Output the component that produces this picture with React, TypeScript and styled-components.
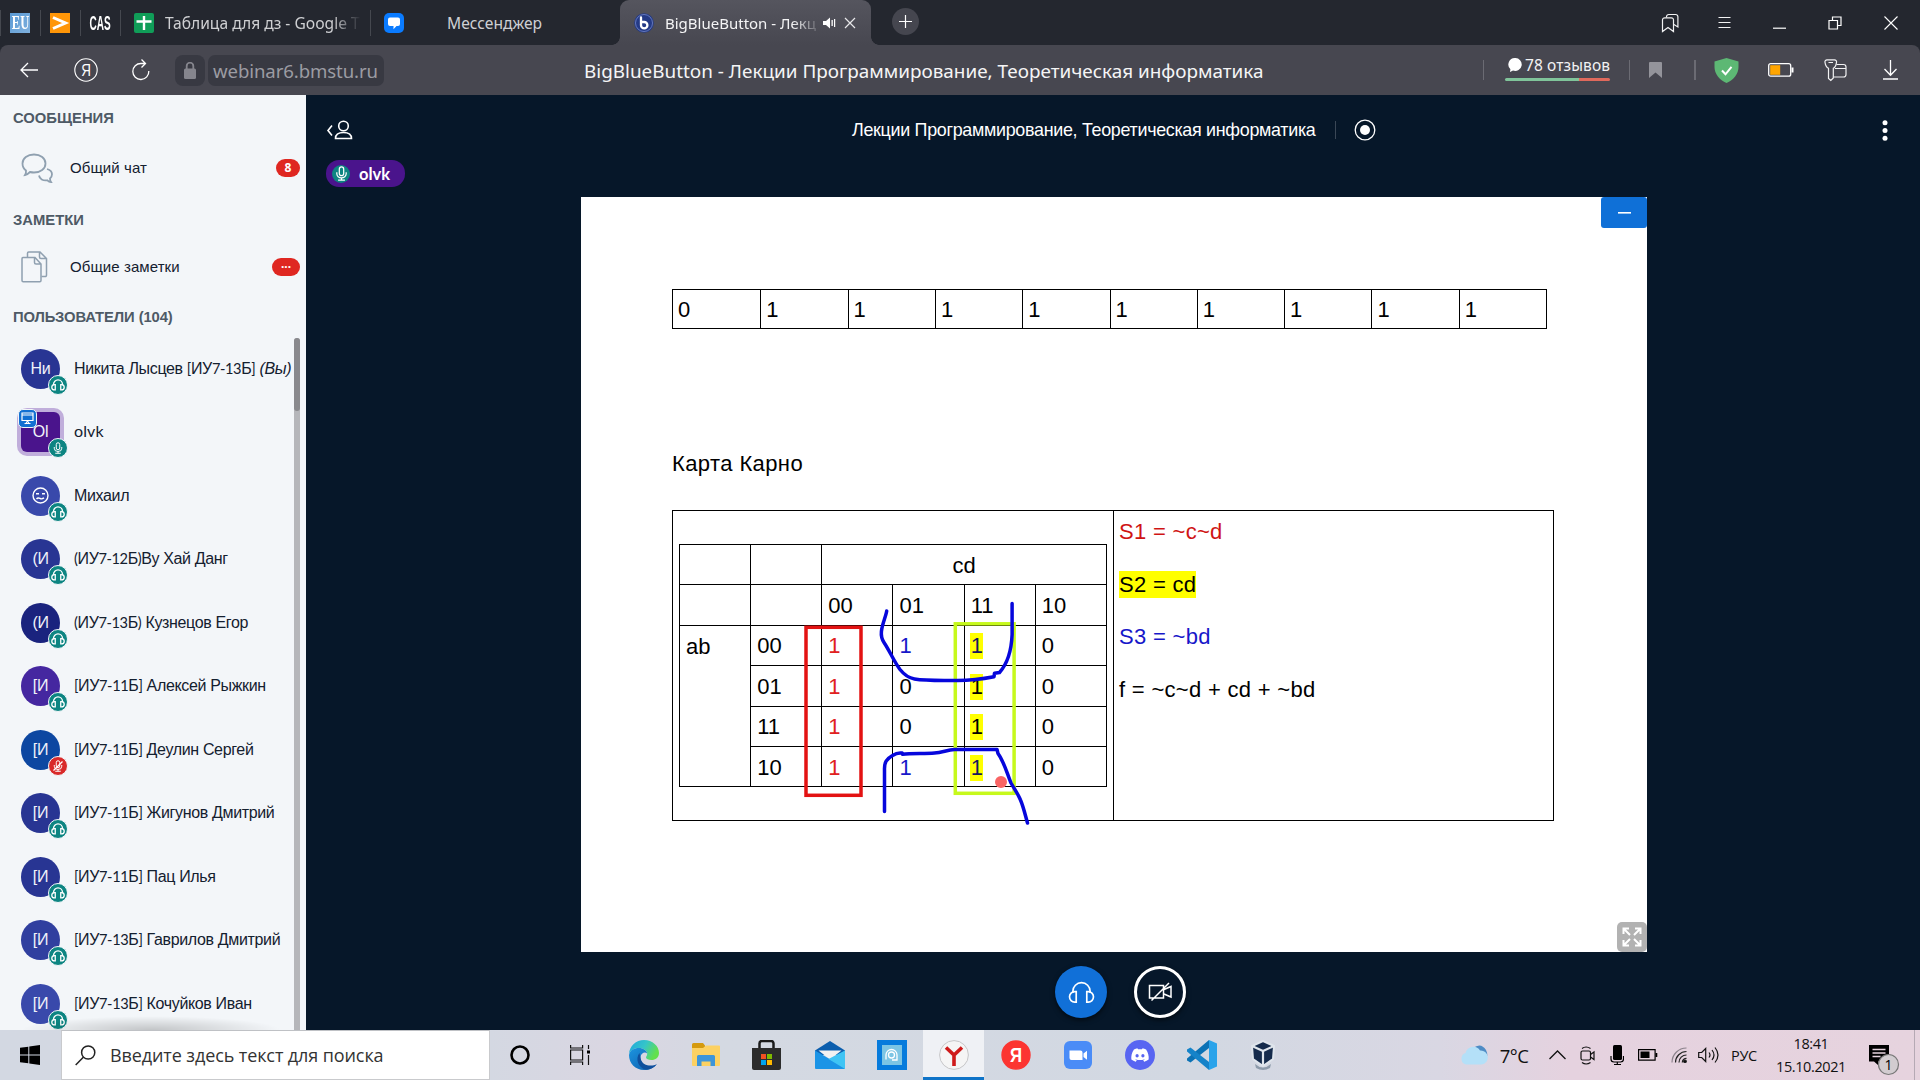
import React from "react";
import styled, { createGlobalStyle } from "styled-components";
import { FaDiscord } from "react-icons/fa";

const UI = '"Noto Sans", "Open Sans", sans-serif';
const ARIAL = '"Liberation Sans", Arial, sans-serif';
const TASK = '"Open Sans", "Noto Sans", sans-serif';

const Global = createGlobalStyle`
  * { box-sizing: border-box; }
  html, body { margin: 0; padding: 0; overflow: hidden; background: #06172a; }
  svg { display: block; flex: none; }
`;

const Screen = styled.div`
  width: 1920px;
  height: 1080px;
  display: flex;
  flex-direction: column;
  overflow: hidden;
  background: #061729;
  font-family: ${ARIAL};
`;

/* ---------- browser tabs ---------- */
const TabBar = styled.div`
  height: 45px;
  flex: none;
  display: flex;
  background: #24272f;
  font-family: ${UI};
  color: #d0d1d4;
`;
const PinnedTab = styled.div`
  width: 40px;
  height: 26px;
  margin-top: 10px;
  border-left: 1px solid #45484f;
  display: flex;
  align-items: center;
  padding-left: 9px;
`;
const Tab = styled.div<{ $w: number; $pad: number }>`
  width: ${(p) => p.$w}px;
  height: 26px;
  margin-top: 10px;
  border-left: 1px solid #45484f;
  display: flex;
  align-items: center;
  padding-left: ${(p) => p.$pad}px;
`;
const TabText = styled.div<{ $w: number; $ml: number; $size?: number; $light?: boolean; $fade?: boolean }>`
  width: ${(p) => p.$w}px;
  margin-left: ${(p) => p.$ml}px;
  white-space: nowrap;
  font-size: ${(p) => p.$size ?? 15.6}px;
  line-height: 24px;
  color: ${(p) => (p.$light ? "#f4f4f5" : "#cfd0d3")};
  mask-image: ${(p) => (p.$fade ? "linear-gradient(90deg, #000 calc(100% - 30px), transparent)" : "none")};
`;
const Favicon = styled.div<{ $bg: string; $r?: number }>`
  width: 20px;
  height: 20px;
  flex: none;
  border-radius: ${(p) => p.$r ?? 0}px;
  background: ${(p) => p.$bg};
  display: flex;
  align-items: center;
  justify-content: center;
`;
const FavText = styled.span<{ $size: number; $squeeze: number }>`
  font: 700 ${(p) => p.$size}px/20px "Liberation Serif", serif;
  color: #fff;
  transform: scaleX(${(p) => p.$squeeze});
`;
const CasText = styled(FavText)`
  font-family: "Liberation Sans", sans-serif;
`;
const ActiveTab = styled.div`
  width: 251px;
  height: 45px;
  border-radius: 9px 9px 0 0;
  background: linear-gradient(#55555e, #474750);
  display: flex;
  align-items: center;
  padding: 1px 0 0 14px;
  position: relative;
  &::before,
  &::after {
    content: "";
    position: absolute;
    bottom: 0;
    width: 8px;
    height: 8px;
  }
  &::before {
    left: -8px;
    background: radial-gradient(circle at 0 0, transparent 7.5px, #474750 8px);
  }
  &::after {
    right: -8px;
    background: radial-gradient(circle at 100% 0, transparent 7.5px, #474750 8px);
  }
`;
const TabTools = styled.div`
  display: flex;
  align-items: center;
  gap: 8px;
`;
const NewTab = styled.div`
  width: 27px;
  height: 27px;
  margin: 8px 0 0 21px;
  border-radius: 50%;
  background: #45464f;
`;
const WindowIcons = styled.div`
  margin-left: auto;
  display: flex;
  align-items: center;
`;
const Slot = styled.div<{ $w: number }>`
  width: ${(p) => p.$w}px;
  flex: none;
  display: flex;
  align-items: center;
  justify-content: center;
`;

/* ---------- toolbar ---------- */
const ToolBarBack = styled.div`
  height: 50px;
  flex: none;
  background: #24272f;
`;
const ToolBar = styled.div`
  height: 50px;
  display: flex;
  align-items: center;
  background: #474750;
  border-radius: 8px 8px 0 0;
  font-family: ${UI};
`;
const NavButtons = styled.div`
  width: 175px;
  display: flex;
  align-items: center;
`;
const LockBox = styled.div`
  width: 30px;
  height: 31px;
  border-radius: 8px;
  background: #383942;
  display: flex;
  align-items: center;
  justify-content: center;
`;
const UrlBox = styled.div`
  width: 176px;
  height: 31px;
  margin-left: 3px;
  border-radius: 7px;
  background: #383942;
  color: #9c9ca3;
  font-size: 18.6px;
  line-height: 31px;
  padding-left: 5px;
  white-space: nowrap;
  letter-spacing: -0.1px;
`;
const PageTitle = styled.div`
  width: 699px;
  margin-left: 200px;
  padding-top: 2px;
  color: #f5f5f6;
  font-size: 18.9px;
  line-height: 30px;
  white-space: nowrap;
`;
const VLine = styled.div<{ $h: number; $w?: number; $c?: string }>`
  width: ${(p) => p.$w ?? 1}px;
  height: ${(p) => p.$h}px;
  background: ${(p) => p.$c ?? "#6b6b73"};
`;
const Reviews = styled.div`
  width: 105px;
  margin: 0 19px 5px 21px;
`;
const ReviewText = styled.div`
  display: flex;
  align-items: center;
  gap: 3px;
  padding-left: 3px;
  height: 22px;
  color: #f2f2f3;
  font-size: 15.5px;
  line-height: 20px;
  white-space: nowrap;
  letter-spacing: 0.1px;
`;
const ReviewBar = styled.div`
  height: 3px;
  border-radius: 2px;
  margin-top: 2px;
  background: linear-gradient(90deg, #80c49a 0 74px, #e0695c 74px);
`;
const ToolIcons = styled.div`
  display: flex;
  align-items: center;
  margin-left: auto;
`;

/* ---------- conference ---------- */
const Body = styled.div`
  height: 935px;
  flex: none;
  display: flex;
`;
const Sidebar = styled.aside`
  width: 306px;
  height: 935px;
  flex: none;
  background: #f3f6f9;
  color: #14202f;
  overflow: hidden;
`;
const SideHeader = styled.div<{ $h: number; $pt?: number; $ls?: number }>`
  height: ${(p) => p.$h}px;
  padding: ${(p) => p.$pt ?? 0}px 0 0 13px;
  display: flex;
  align-items: center;
  color: #4e5a66;
  font-size: 14.8px;
  font-weight: 700;
  white-space: pre;
  letter-spacing: ${(p) => p.$ls ?? 0}px;
`;
const SideRow = styled.div<{ $h: number }>`
  height: ${(p) => p.$h}px;
  display: flex;
  align-items: center;
  padding: 0 6px 0 21px;
`;
const SideLabel = styled.div`
  margin-left: 16px;
  font-size: 15px;
  line-height: 20px;
  letter-spacing: 0.08px;
  flex: 1;
`;
const Count = styled.div<{ $w: number }>`
  width: ${(p) => p.$w}px;
  height: 18px;
  border-radius: 9px;
  background: #df2721;
  color: #fff;
  font: 700 12px/18px "Noto Sans", sans-serif;
  text-align: center;
`;
const UserList = styled.div`
  height: 693px;
  display: flex;
  overflow: hidden;
  position: relative;
`;
const Users = styled.div`
  width: 294px;
  overflow: hidden;
`;
const Track = styled.div`
  width: 6px;
  margin-top: 1px;
  background: #b5b6ba;
  border-radius: 3px 3px 0 0;
`;
const Thumb = styled.div`
  height: 73px;
  border-radius: 3px;
  background: #89898d;
`;
const ListShade = styled.div`
  position: absolute;
  left: 20px;
  bottom: 0;
  width: 262px;
  height: 14px;
  background: radial-gradient(ellipse at 50% 100%, rgba(0, 0, 0, 0.2), transparent 70%);
`;
const UserRow = styled.div`
  height: 63.5px;
  display: flex;
  align-items: center;
  padding-left: 21px;
`;
const Avatar = styled.div<{ $c: string; $square?: boolean }>`
  width: 39px;
  height: 40px;
  flex: none;
  border-radius: ${(p) => (p.$square ? "6px" : "50%")};
  box-shadow: ${(p) => (p.$square ? "0 0 0 4px #c0aedb" : "none")};
  background: ${(p) => p.$c};
  color: #f1f2fa;
  font-size: 16px;
  display: flex;
  align-items: center;
  justify-content: center;
  position: relative;
  letter-spacing: -0.3px;
`;
const Status = styled.div<{ $c: string }>`
  position: absolute;
  left: 27px;
  top: 26px;
  width: 20px;
  height: 20px;
  border-radius: 50%;
  border: 1px solid #f3f6f9;
  background: ${(p) => p.$c};
  display: flex;
  align-items: center;
  justify-content: center;
`;
const Presenter = styled.div`
  position: absolute;
  left: -3px;
  top: -3px;
  width: 19px;
  height: 19px;
  border-radius: 5px;
  border: 1px solid #f3f6f9;
  background: #1270d2;
  display: flex;
  align-items: center;
  justify-content: center;
`;
const UserName = styled.div`
  margin-left: 14px;
  font-size: 16px;
  line-height: 22px;
  letter-spacing: -0.35px;
  white-space: pre;
`;
const Latin = styled.span<{ $small: boolean }>`
  font-family: Lato, sans-serif;
  font-size: ${(p) => (p.$small ? 14.6 : 16)}px;
  letter-spacing: ${(p) => (p.$small ? -0.4 : 0.1)}px;
  line-height: 20px;
`;
const Stage = styled.main`
  flex: 1;
  min-width: 0;
  display: flex;
  flex-direction: column;
`;
const StageHeader = styled.div`
  height: 65px;
  display: flex;
  align-items: center;
  padding: 5px 0 0 20px;
`;
const MeetingTitle = styled.div`
  width: 483px;
  margin-left: 499px;
  color: #fff;
  font-size: 17.9px;
  line-height: 24px;
  white-space: nowrap;
  letter-spacing: -0.3px;
`;
const MenuSlot = styled(Slot)`
  margin-left: auto;
`;
const Talking = styled.div`
  width: 79px;
  height: 27px;
  margin-left: 20px;
  border-radius: 13px;
  background: #4a148c;
  display: flex;
  align-items: center;
  padding-left: 6px;
  color: #fff;
  font: 700 16.5px/24px Lato, sans-serif;
`;
const TalkIcon = styled.div`
  width: 18px;
  height: 18px;
  margin-right: 9px;
  border-radius: 50%;
  background: #0d8582;
  display: flex;
  align-items: center;
  justify-content: center;
`;
const Slide = styled.section`
  width: 1066px;
  height: 755px;
  margin: 10px 0 0 275px;
  background: #fff;
  position: relative;
  padding: 92px 0 0 91px;
  color: #000;
  font-size: 22px;
  line-height: 26px;
`;
const Minimize = styled.div`
  position: absolute;
  right: 0;
  top: 0;
  width: 46px;
  height: 31px;
  border-radius: 3px;
  background: #0f70d7;
  display: flex;
  align-items: center;
  justify-content: center;
`;
const Fullscreen = styled.div`
  position: absolute;
  right: 0;
  bottom: 0;
  width: 30px;
  height: 30px;
  border-radius: 5px;
  background: #b2b2b2;
  display: flex;
  align-items: center;
  justify-content: center;
`;
const BitRow = styled.div`
  width: 875px;
  height: 40px;
  display: grid;
  grid-template-columns: repeat(10, 1fr);
  border: 1px solid #000;
`;
const BitCell = styled.div`
  padding: 7px 0 0 5px;
  & + & {
    border-left: 1px solid #000;
  }
`;
const Caption = styled.div`
  margin-top: 122px;
  height: 27px;
  letter-spacing: 0.4px;
`;
const Outer = styled.div`
  width: 882px;
  height: 311px;
  margin-top: 32px;
  border: 1px solid #000;
  display: grid;
  grid-template-columns: 440px 1fr;
`;
const OuterLeft = styled.div`
  padding: 33px 0 0 6px;
`;
const OuterRight = styled.div`
  border-left: 1px solid #000;
  padding: 7px 0 0 5px;
`;
const Formula = styled.div<{ $c: string; $bg?: string }>`
  height: 52.5px;
  color: ${(p) => p.$c};
  span {
    background: ${(p) => p.$bg ?? "none"};
    display: inline-block;
    height: 27px;
    line-height: 27px;
    white-space: pre;
    letter-spacing: 0.3px;
  }
`;
const KTable = styled.table`
  width: 428px;
  border-collapse: collapse;
  table-layout: fixed;
  td {
    border: 1px solid #000;
    height: 40.4px;
    padding: 2px 0 0 6px;
    vertical-align: middle;
    line-height: 26px;
  }
`;
const CdCell = styled.td`
  && {
    text-align: center;
    padding: 3px 0 0 0;
  }
`;
const AbCell = styled.td`
  && {
    vertical-align: top;
    padding-top: 8px;
  }
`;
const Bit = styled.span<{ $c: string; $mark?: boolean }>`
  display: inline-block;
  height: 26px;
  padding: 0 0.5px;
  margin-left: -0.5px;
  color: ${(p) => p.$c};
  background: ${(p) => (p.$mark ? "#ffff00" : "none")};
`;
const Ink = styled.svg`
  position: absolute;
  left: 0;
  top: 0;
`;
const Actions = styled.div`
  display: flex;
  gap: 27px;
  margin: 14px 0 0 749px;
`;
const RoundButton = styled.div<{ $bg: string; $ring?: boolean }>`
  width: 52px;
  height: 52px;
  border-radius: 50%;
  background: ${(p) => p.$bg};
  border: ${(p) => (p.$ring ? "3px solid #fff" : "none")};
  box-shadow: 0 2px 5px rgba(0, 0, 0, 0.6);
  display: flex;
  align-items: center;
  justify-content: center;
`;

/* ---------- taskbar ---------- */
const TaskBar = styled.footer`
  height: 50px;
  flex: none;
  display: flex;
  background: linear-gradient(90deg, #d3d8e2 0, #d4d8e2 490px, #dad6e2 620px, #d4d9e2 720px, #d2d8e2 1200px, #d9d7e3 1440px, #e5d2df 1570px, #e6d3de 1920px);
  color: #111;
  font-family: ${TASK};
`;
const Search = styled.div`
  width: 429px;
  height: 50px;
  margin-left: 1px;
  background: #fff;
  border: 1px solid #c9cacd;
  border-top: 1px solid #bfc1c5;
  display: flex;
  align-items: center;
  padding-left: 13px;
  color: #333;
  font-size: 18px;
  letter-spacing: -0.1px;
  white-space: nowrap;
`;
const SearchText = styled.span`
  margin-left: 14px;
`;
const TaskSlot = styled.div<{ $w: number; $active?: boolean }>`
  width: ${(p) => p.$w}px;
  height: 50px;
  flex: none;
  display: flex;
  align-items: center;
  justify-content: center;
  background: ${(p) => (p.$active ? "#eff1f5" : "none")};
  border-bottom: ${(p) => (p.$active ? "3px solid #0f74c8" : "none")};
  padding-top: ${(p) => (p.$active ? "3px" : "0")};
`;
const Tray = styled.div`
  margin-left: auto;
  display: flex;
  align-items: center;
`;
const TrayText = styled.div<{ $w: number; $size: number; $ls?: number }>`
  width: ${(p) => p.$w}px;
  font-size: ${(p) => p.$size}px;
  letter-spacing: ${(p) => p.$ls ?? 0}px;
  text-align: center;
  white-space: nowrap;
`;
const Clock = styled.div`
  width: 90px;
  text-align: center;
  font-size: 14.5px;
  line-height: 23px;
  letter-spacing: -0.4px;
`;
const Note = styled.div`
  width: 48px;
  height: 50px;
  margin-left: 11px;
  border-right: 1px solid #b5a9b4;
`;

/* ---------- icons ---------- */
const Headset = ({ size, sw = 1.6 }: { size: number; sw?: number }) => (
  <svg width={size} height={size} viewBox="0 0 24 24" fill="none" stroke="#fff" strokeWidth={sw}>
    <path d="M4.3 12.5V11a7.7 7.7 0 0 1 15.4 0v1.5" />
    <path d="M7.3 11.2v9.3H6a4.6 4.6 0 0 1 0-9.3zM16.7 11.2v9.3H18a4.6 4.6 0 0 0 0-9.3z" />
  </svg>
);
const Mic = ({ size, off }: { size: number; off?: boolean }) => (
  <svg width={size} height={size} viewBox="0 0 24 24" fill="none" stroke="#fff" strokeWidth="2">
    <rect x="8.5" y="1.5" width="7" height="14" rx="3.5" />
    <path d="M4.5 10v2.5a7.5 6.5 0 0 0 15 0V10M12 19v3.5M6.5 22.5h11" />
    {off && <path d="M3 21 21 3" strokeWidth="2.6" />}
  </svg>
);
const ChatIcon = () => (
  <svg width="33" height="31" viewBox="0 0 33 31" fill="none" stroke="#8fa0b0" strokeWidth="1.8">
    <path d="M13 1.5c6.5 0 11.5 3.8 11.5 9s-5 9-11.5 9c-1.400 0-2.700-.2-4-.5C7.500 20.500 6 21.700 4 22c.8-1.300 1.200-2.800 1-4.500-2.300-1.700-3.500-4.200-3.500-7 0-5.200 5-9 11.500-9z" />
    <path d="M26 16c3 .8 5 2.800 5 5.300 0 1.700-.8 3.200-2 4.200 0 1.300.3 2.500 1 3.500-1.500 0-2.800-.8-3.700-1.700-4.300.7-7.800-1.500-8.300-4.800" />
  </svg>
);
const NotesIcon = () => (
  <svg width="33" height="32" viewBox="0 0 33 32" fill="none" stroke="#8fa0b0" strokeWidth="1.5">
    <path d="M2 6.500h12l6 6.500v16.500a1.200 1.200 0 0 1-1.200 1.200H2.200A1.200 1.200 0 0 1 1 29.500V7.700a1.200 1.200 0 0 1 1-1.200zM13.500 7v4.500a1.500 1.500 0 0 0 1.500 1.500h5" />
    <path d="M6.500 6V2.200A1.200 1.200 0 0 1 7.700 1H19l6.500 6.500v16.800a1.200 1.200 0 0 1-1.200 1.200H20.500M18.500 1.500V6A1.500 1.500 0 0 0 20 7.500h5" />
  </svg>
);
const Yandex = ({ fill, stroke, size }: { fill: string; stroke: string; size: number }) => (
  <svg width={size} height={size} viewBox="0 0 30 30">
    <circle cx="15" cy="15" r="14" fill={fill} stroke={stroke} strokeWidth="1.400" />
    <text x="15" y="22.500" textAnchor="middle" fontSize="21" fontWeight={fill === "none" ? 400 : 700} fontFamily="Liberation Sans, sans-serif" fill="#fff" transform="translate(3 0) scale(.8 1)">
      Я
    </text>
  </svg>
);

const users: { ini: string; name: string; c: string; kind?: "mic" | "off"; face?: boolean; you?: boolean }[] = [
  { ini: "Ни", name: "Никита Лысцев [ИУ7-13Б] ", c: "#283593", you: true },
  { ini: "Ol", name: "olvk", c: "#4a148c", kind: "mic" },
  { ini: "", name: "Михаил", c: "#3949ab", face: true },
  { ini: "(И", name: "(ИУ7-12Б)Ву Хай Данг", c: "#283593" },
  { ini: "(И", name: "(ИУ7-13Б) Кузнецов Егор", c: "#1a237e" },
  { ini: "[И", name: "[ИУ7-11Б] Алексей Рыжкин", c: "#4527a0" },
  { ini: "[И", name: "[ИУ7-11Б] Деулин Сергей", c: "#0d47a1", kind: "off" },
  { ini: "[И", name: "[ИУ7-11Б] Жигунов Дмитрий", c: "#283593" },
  { ini: "[И", name: "[ИУ7-11Б] Пац Илья", c: "#283593" },
  { ini: "[И", name: "[ИУ7-13Б] Гаврилов Дмитрий", c: "#303f9f" },
  { ini: "[И", name: "[ИУ7-13Б] Кочуйков Иван", c: "#3949ab" },
];

const Mixed = ({ text }: { text: string }) => (
  <>
    {text.split(/([0-9\-[\]()a-z]+)/).map((s, i) =>
      i % 2 ? (
        <Latin key={i} $small={!/[a-z]/.test(s)}>
          {s}
        </Latin>
      ) : (
        s
      )
    )}
  </>
);

const bits = ["0", "1", "1", "1", "1", "1", "1", "1", "1", "1"];
const karno = [
  { ab: "00", mid: "1" },
  { ab: "01", mid: "0" },
  { ab: "11", mid: "0" },
  { ab: "10", mid: "1" },
];
const BLUE = "#1717c9";

export default function App() {
  return (
    <Screen>
      <Global />
      <TabBar>
        <PinnedTab>
          <Favicon $bg="linear-gradient(135deg,#5b9ad5,#7fb0dd)">
            <FavText $size={18} $squeeze={0.7}>EU</FavText>
          </Favicon>
        </PinnedTab>
        <PinnedTab>
          <Favicon $bg="#ff9608">
            <svg width="20" height="20" viewBox="0 0 20 20" fill="none" stroke="#fff" strokeWidth="3">
              <path d="M3 4.500 15.500 10 3 15.500" />
            </svg>
          </Favicon>
        </PinnedTab>
        <PinnedTab>
          <Favicon $bg="none">
            <CasText $size={20} $squeeze={0.5}>CAS</CasText>
          </Favicon>
        </PinnedTab>
        <Tab $w={250} $pad={13}>
          <Favicon $bg="#109d58" $r={2}>
            <svg width="20" height="20" viewBox="0 0 20 20" fill="none" stroke="#fff" strokeWidth="2.400">
              <path d="M10 3v14M2.500 8.500h15" />
            </svg>
          </Favicon>
          <TabText $w={196} $ml={11} $fade>Таблица для дз - Google Т</TabText>
        </Tab>
        <Tab $w={250} $pad={13}>
          <Favicon $bg="#0a7bff" $r={5}>
            <svg width="20" height="20" viewBox="0 0 20 20">
              <path d="M6 4.500h8a2 2 0 0 1 2 2V11a2 2 0 0 1-2 2h-1.500l-3 3.200V13H6a2 2 0 0 1-2-2V6.500a2 2 0 0 1 2-2z" fill="#fff" />
            </svg>
          </Favicon>
          <TabText $w={135} $ml={43}>Мессенджер</TabText>
        </Tab>
        <ActiveTab>
          <svg width="20" height="20" viewBox="0 0 20 20">
            <circle cx="10" cy="10" r="9.800" fill="#243a86" />
            <circle cx="10" cy="10" r="8.500" fill="none" stroke="#6478bb" />
            <path d="M7 4.500v7.700a3.200 3.200 0 1 0 3.200-3.200H8.500" fill="none" stroke="#fff" strokeWidth="2.300" strokeLinecap="round" />
          </svg>
          <TabText $w={157} $ml={11} $size={15} $light $fade>BigBlueButton - Лекц</TabText>
          <TabTools>
            <svg width="14" height="14" viewBox="0 0 14 14" fill="#fff">
              <path d="M1 5h3l4-3.500v11L4 9H1zM9.500 4h1.300v6H9.500zM12 3h1.200v8H12z" />
            </svg>
            <svg width="12" height="12" viewBox="0 0 12 12" stroke="#e8e8ea" strokeWidth="1.200">
              <path d="M1 1l10 10M11 1 1 11" />
            </svg>
          </TabTools>
        </ActiveTab>
        <NewTab>
          <svg width="27" height="27" viewBox="0 0 27 27" stroke="#fff" strokeWidth="1.200">
            <path d="M13.500 7v13M7 13.500h13" />
          </svg>
        </NewTab>
        <WindowIcons>
          <Slot $w={55}>
            <svg width="18" height="20" viewBox="0 0 18 20" fill="none" stroke="#f2f2f3" strokeWidth="1.200">
              <path d="M1.500 18.500V7a2.200 2.200 0 0 1 2.200-2.200h6.600A2.200 2.200 0 0 1 12.500 7v11.500L7 14.500z" />
              <path d="M5.500 4.500V3.700a2.200 2.200 0 0 1 2.200-2.200h7a2.200 2.200 0 0 1 2.200 2.200V14l-4-2.500" />
            </svg>
          </Slot>
          <Slot $w={55}>
            <svg width="13" height="13" viewBox="0 0 13 13" stroke="#f2f2f3" strokeWidth="1.200">
              <path d="M.500 1.500h12M.500 6.500h12M.500 11.500h12" />
            </svg>
          </Slot>
          <Slot $w={55}>
            <svg width="13" height="13" viewBox="0 0 13 13" stroke="#fff" strokeWidth="1.200">
              <path d="M0 12.200h13" />
            </svg>
          </Slot>
          <Slot $w={55}>
            <svg width="14" height="14" viewBox="0 0 14 14" fill="none" stroke="#fff" strokeWidth="1.200">
              <path d="M1 4.500h8.500V13H1zM4.500 4V1H13v8.500H10" />
            </svg>
          </Slot>
          <Slot $w={58}>
            <svg width="14" height="14" viewBox="0 0 14 14" stroke="#fff" strokeWidth="1.100">
              <path d="M.500.500l13 13M13.500.500l-13 13" />
            </svg>
          </Slot>
        </WindowIcons>
      </TabBar>

      <ToolBarBack>
        <ToolBar>
          <NavButtons>
            <Slot $w={58}>
              <svg width="18" height="16" viewBox="0 0 18 16" fill="none" stroke="#fff" strokeWidth="1.300">
                <path d="M18 8H1M8 1 1 8l7 7" />
              </svg>
            </Slot>
            <Slot $w={55}>
              <Yandex fill="none" stroke="#fff" size={24} />
            </Slot>
            <Slot $w={55}>
              <svg width="18" height="22" viewBox="0 0 18 22" fill="none" stroke="#fff" strokeWidth="1.300">
                <path d="M16.800 12A8 8 0 1 1 9 4.500h4.500M9.500.500l4 4-4 4" />
              </svg>
            </Slot>
          </NavButtons>
          <LockBox>
            <svg width="12" height="17" viewBox="0 0 12 17" fill="none">
              <rect y="6.500" width="12" height="10.500" rx="1.500" fill="#85858d" />
              <path d="M2.700 7V4a3.300 3.300 0 0 1 6.600 0v3" stroke="#85858d" strokeWidth="1.800" />
            </svg>
          </LockBox>
          <UrlBox>webinar6.bmstu.ru</UrlBox>
          <PageTitle>BigBlueButton - Лекции Программирование, Теоретическая информатика</PageTitle>
          <ToolIcons>
            <VLine $h={20} />
            <Reviews>
              <ReviewText>
                <svg width="14" height="14" viewBox="0 0 14 14" fill="#fff">
                  <path d="M7 0a6.500 6.500 0 1 1-2 12.600L2 14l.4-2.800A6.500 6.500 0 0 1 7 0z" />
                </svg>
                78 отзывов
              </ReviewText>
              <ReviewBar />
            </Reviews>
            <VLine $h={20} />
            <Slot $w={51}>
              <svg width="13" height="16" viewBox="0 0 13 16" fill="#94949b">
                <path d="M1 0h11a1 1 0 0 1 1 1v15l-6.500-5.500L0 16V1a1 1 0 0 1 1-1z" />
              </svg>
            </Slot>
            <Slot $w={27}>
              <VLine $h={20} $w={2} />
            </Slot>
            <Slot $w={36}>
              <svg width="25" height="25" viewBox="0 0 25 25">
                <path d="M12.500 0 24.500 3.500V9c0 7-5 13-12 16C5.500 22 .500 16 .500 9V3.500z" fill="#5db874" />
                <path d="m8 12.500 3.500 3.800 6-7.500" stroke="#fff" strokeWidth="2" fill="none" />
              </svg>
            </Slot>
            <Slot $w={73}>
              <svg width="26" height="14" viewBox="0 0 26 14">
                <rect x=".7" y=".7" width="22" height="12.500" rx="2" fill="none" stroke="#fff" strokeWidth="1.300" />
                <rect x="2.200" y="2.200" width="10" height="9.600" fill="#ffa500" />
                <path d="M23.500 4.500h2v5h-2z" fill="#fff" />
              </svg>
            </Slot>
            <Slot $w={36}>
              <svg width="23" height="23" viewBox="0 0 23 23" fill="none" stroke="#f2f2f3" strokeWidth="1.200">
                <path d="M3 .800h7.500a2 2 0 0 1 2 2.500c-.4 3-1.300 5-3.200 6V19l-2.500 2.500L4.500 19.500V9.300C2.500 8.300 1.400 6 1 3.300A2 2 0 0 1 3 .800zM4.500 3.500h4.500" />
                <path d="M12.500 5.500h7a2.500 2.500 0 0 1 2.500 2.500v7.500a2.500 2.500 0 0 1-2.500 2.500H9.500M11 9.500h11" />
              </svg>
            </Slot>
            <Slot $w={7} />
            <Slot $w={60}>
              <svg width="15" height="20" viewBox="0 0 15 20" fill="none" stroke="#fff" strokeWidth="1.300">
                <path d="M7.500 0v15M1.500 9l6 6.200L13.500 9M0 19h15" />
              </svg>
            </Slot>
          </ToolIcons>
        </ToolBar>
      </ToolBarBack>

      <Body>
        <Sidebar>
          <SideHeader $h={45}>СООБЩЕНИЯ</SideHeader>
          <SideRow $h={56}>
            <ChatIcon />
            <SideLabel>Общий чат</SideLabel>
            <Count $w={24}>8</Count>
          </SideRow>
          <SideHeader $h={47}>ЗАМЕТКИ</SideHeader>
          <SideRow $h={48}>
            <NotesIcon />
            <SideLabel>Общие заметки</SideLabel>
            <Count $w={28}>···</Count>
          </SideRow>
          <SideHeader $h={46} $pt={6} $ls={-0.1}>ПОЛЬЗОВАТЕЛИ (104)</SideHeader>
          <UserList>
            <Users>
              {users.map((u) => (
                <UserRow key={u.name}>
                  <Avatar $c={u.c} $square={u.kind === "mic"}>
                    {u.ini}
                    {u.face && (
                      <svg width="17" height="17" viewBox="0 0 17 17" fill="none" stroke="#fff" strokeWidth="1.400">
                        <circle cx="8.500" cy="8.500" r="7.500" />
                        <path d="M4 6.800h3M10 6.800h3M4.500 12c1-1.300 2.300-1.300 3.500-.6s2.500.6 4-.5" />
                      </svg>
                    )}
                    {u.kind === "mic" && (
                      <Presenter>
                        <svg width="13" height="13" viewBox="0 0 13 13" fill="none" stroke="#fff" strokeWidth="1.200">
                          <path d="M1 1h11v7.500H1zM1 3h11M4.500 12l2-3 2 3M3.500 11.500h6" />
                        </svg>
                      </Presenter>
                    )}
                    <Status $c={u.kind === "off" ? "#d92a2a" : "#0d8582"}>
                      {u.kind ? <Mic size={12} off={u.kind === "off"} /> : <Headset size={14} sw={2.2} />}
                    </Status>
                  </Avatar>
                  <UserName>
                    <Mixed text={u.name} />
                    {u.you && <i>(Вы)</i>}
                  </UserName>
                </UserRow>
              ))}
            </Users>
            <Track>
              <Thumb />
            </Track>
            <ListShade />
          </UserList>
        </Sidebar>

        <Stage>
          <StageHeader>
            <svg width="27" height="20" viewBox="0 0 27 20" fill="none" stroke="#fff" strokeWidth="1.600">
              <path d="M6 5.500 2 10.500l4 5" />
              <circle cx="17.500" cy="6" r="4.800" />
              <path d="M9.500 18.500c0-4 3-6 8-6s8 2 8 6z" />
            </svg>
            <MeetingTitle>Лекции Программирование, Теоретическая информатика</MeetingTitle>
            <VLine $h={18} $c="#3a4756" />
            <Slot $w={58}>
              <svg width="22" height="22" viewBox="0 0 22 22">
                <circle cx="11" cy="11" r="9.800" fill="none" stroke="#fff" strokeWidth="1.300" />
                <circle cx="11" cy="11" r="5" fill="#fff" />
              </svg>
            </Slot>
            <MenuSlot $w={70}>
              <svg width="6" height="21" viewBox="0 0 6 21" fill="#fff">
                <circle cx="3" cy="2.800" r="2.500" />
                <circle cx="3" cy="10.500" r="2.500" />
                <circle cx="3" cy="18.200" r="2.500" />
              </svg>
            </MenuSlot>
          </StageHeader>
          <Talking>
            <TalkIcon>
              <Mic size={15} />
            </TalkIcon>
            olvk
          </Talking>
          <Slide>
            <BitRow>
              {bits.map((b, i) => (
                <BitCell key={i}>{b}</BitCell>
              ))}
            </BitRow>
            <Caption>Карта Карно</Caption>
            <Outer>
              <OuterLeft>
                <KTable>
                  <tbody>
                    <tr>
                      <td />
                      <td />
                      <CdCell colSpan={4}>cd</CdCell>
                    </tr>
                    <tr>
                      <td />
                      <td />
                      <td>00</td>
                      <td>01</td>
                      <td>11</td>
                      <td>10</td>
                    </tr>
                    {karno.map((r, i) => (
                      <tr key={r.ab}>
                        {i === 0 && <AbCell rowSpan={4}>ab</AbCell>}
                        <td>{r.ab}</td>
                        <td>
                          <Bit $c="#e02020">1</Bit>
                        </td>
                        <td>
                          <Bit $c={r.mid === "1" ? BLUE : "#000"}>{r.mid}</Bit>
                        </td>
                        <td>
                          <Bit $c={r.mid === "1" ? "#17175e" : "#000"} $mark>1</Bit>
                        </td>
                        <td>
                          <Bit $c="#000">0</Bit>
                        </td>
                      </tr>
                    ))}
                  </tbody>
                </KTable>
              </OuterLeft>
              <OuterRight>
                <Formula $c="#cf1414"><span>S1 = ~c~d</span></Formula>
                <Formula $c="#000" $bg="#ffff00"><span>S2 = cd</span></Formula>
                <Formula $c={BLUE}><span>S3 = ~bd</span></Formula>
                <Formula $c="#000"><span>f = ~c~d + cd + ~bd</span></Formula>
              </OuterRight>
            </Outer>
            <Ink width="1066" height="755" viewBox="581 197 1066 755" fill="none" strokeWidth="3.500">
              <rect x="806" y="627.300" width="55" height="168" stroke="#e31212" />
              <rect x="955.300" y="623.800" width="58.800" height="169.500" stroke="#c6f91c" />
              <g stroke="#0606dc" strokeLinecap="round" strokeLinejoin="round">
                <path d="M886.700 611c-1 6-4.500 13-5.300 20.500-.5 5 .6 8 2.600 11 6 9 10 19 16 27 4 5 8.500 8.500 14.500 9.500 12 2 26 1.300 43 1.500 14 0 25-1.500 36.500-3.700l.5-3.500 5-.8c8-9 12-23 12.600-38V603.500" />
                <path d="M884.500 811.500V770c-.3-8 2-11 8-14.500 3-2 6-3 9.500-2.500l.5 1.300c9-1.500 22-.3 32-1.300 8-.8 13-3 20-3.500h42.500l1 4c6 8 9 20 13 29.500 4 7 7.500 12 9.500 17 3 7 5 16 7 23" />
              </g>
              <circle cx="1001" cy="782" r="6" fill="#f96464" />
            </Ink>
            <Minimize>
              <svg width="13" height="2" viewBox="0 0 13 2">
                <rect width="13" height="1.600" fill="#fff" />
              </svg>
            </Minimize>
            <Fullscreen>
              <svg width="20" height="20" viewBox="0 0 20 20" fill="none" stroke="#fff" strokeWidth="2">
                <path d="M1.500 7V1.500H7M2 2l6 6M13 1.500h5.500V7M18 2l-6 6M1.500 13v5.500H7M2 18l6-6M13 18.500h5.500V13M18 18l-6-6" />
              </svg>
            </Fullscreen>
          </Slide>
          <Actions>
            <RoundButton $bg="#1170d8">
              <Headset size={27} sw={1.5} />
            </RoundButton>
            <RoundButton $bg="#06172a" $ring>
              <svg width="24" height="20" viewBox="0 0 24 20" fill="none" stroke="#fff" strokeWidth="1.500">
                <path d="M1.500 3.500h14v12.500h-14zM16 7.500l7-3v10.500l-7-3M3.500 18.500 21 1" />
              </svg>
            </RoundButton>
          </Actions>
        </Stage>
      </Body>

      <TaskBar>
        <TaskSlot $w={60}>
          <svg width="20" height="20" viewBox="0 0 20 20">
            <path d="M0 2.800 8.300 1.700v7.800H0zM9.300 1.500 20 0v9.500H9.300zM0 10.500h8.300v7.800L0 17.200zM9.300 10.500H20V20L9.300 18.500z" />
          </svg>
        </TaskSlot>
        <Search>
          <svg width="21" height="21" viewBox="0 0 21 21" fill="none" stroke="#222" strokeWidth="1.500">
            <circle cx="13.200" cy="7.500" r="6.600" />
            <path d="M8.300 12.200.700 20" />
          </svg>
          <SearchText>Введите здесь текст для поиска</SearchText>
        </Search>
        <TaskSlot $w={60}>
          <svg width="20" height="20" viewBox="0 0 20 20">
            <circle cx="10" cy="10" r="8.500" fill="none" stroke="#000" strokeWidth="2.600" />
          </svg>
        </TaskSlot>
        <TaskSlot $w={60}>
          <svg width="20" height="20" viewBox="0 0 20 20" fill="none" stroke="#111" strokeWidth="1.200">
            <path d="M.600 5h12v10h-12zM.600 0v3h12V0M.600 20v-3h12v3M18.500 0v4M18.500 10v10" />
            <rect x="17" y="5.500" width="3" height="3" fill="#000" stroke="none" />
          </svg>
        </TaskSlot>
        <TaskSlot $w={67}>
          <svg width="30" height="30" viewBox="0 0 30 30">
            <defs>
              <linearGradient id="eg" x1="0" y1="0" x2="1" y2=".4">
                <stop offset="0" stopColor="#1fa6dd" />
                <stop offset=".55" stopColor="#35c5c9" />
                <stop offset="1" stopColor="#62e04c" />
              </linearGradient>
              <linearGradient id="eb" x1="0" y1="0" x2="1" y2="1">
                <stop offset="0" stopColor="#1c95df" />
                <stop offset="1" stopColor="#0d5bab" />
              </linearGradient>
            </defs>
            <path d="M0 14C.500 6 7 0 15 0c8.500 0 15 6 15 13 0 4.500-3.500 7-7.500 7-3 0-5.500-1-5.500-2.500 0-1 1.200-1.500 1.200-4C18.200 10.500 14 8 10 8 5 8 1 11 0 14z" fill="url(#eg)" />
            <path d="M0 15C1 10 5 8 10 8c4 0 8 2.500 8.200 5.500C16 11.500 12 13 11.500 17c-.5 5 4 9.500 9 9.500 3 0 5-1 7.300-2.300C25 28 20.500 30 15 30 6.500 30 0 23.500 0 15z" fill="url(#eb)" />
            <path d="M10.500 13C6 19 9 27.500 17 29.800c5-.4 8.500-2.800 10.800-5.600C24 26.500 13 27 11.500 18z" fill="#0f4f9c" />
          </svg>
        </TaskSlot>
        <TaskSlot $w={57}>
          <svg width="28" height="24" viewBox="0 0 28 24">
            <path d="M0 1.500A1.500 1.500 0 0 1 1.500 0H11l2 2.500V6H0z" fill="#d59a0e" />
            <path d="M0 5h11l3-2.500h13a1 1 0 0 1 1 1V22a1 1 0 0 1-1 1H1a1 1 0 0 1-1-1z" fill="#fcd162" />
            <path d="M5 23V13.500A1.500 1.500 0 0 1 6.500 12h15a1.500 1.500 0 0 1 1.500 1.500V23h-4.500v-4.500h-9V23z" fill="#3d95d9" />
          </svg>
        </TaskSlot>
        <TaskSlot $w={65}>
          <svg width="29" height="30" viewBox="0 0 29 30">
            <path d="M7.500 9V3.500a2.500 2.500 0 0 1 2.500-2.500h9a2.500 2.500 0 0 1 2.500 2.500V9" fill="none" stroke="#1b1b1b" strokeWidth="2.500" />
            <path d="M0 8h29v20a2 2 0 0 1-2 2H2a2 2 0 0 1-2-2z" fill="#2c2c2c" />
            <path d="M9 14h5v5H9z" fill="#f25022" />
            <path d="M15 14h5v5h-5z" fill="#7fba00" />
            <path d="M9 20h5v5H9z" fill="#00a4ef" />
            <path d="M15 20h5v5h-5z" fill="#ffb900" />
          </svg>
        </TaskSlot>
        <TaskSlot $w={62}>
          <svg width="30" height="28" viewBox="0 0 30 28">
            <path d="M0 9.500 15 0l15 9.500V14H0z" fill="#0b5eae" />
            <path d="M3.500 9.500h23L15 18.500z" fill="#f2f2f2" />
            <path d="M0 9.500 30 27a1 1 0 0 1-1 1H1a1 1 0 0 1-1-1z" fill="#1b94e6" />
            <path d="M30 9.500 13.500 18 30 28z" fill="#3fc4f4" />
          </svg>
        </TaskSlot>
        <TaskSlot $w={62}>
          <svg width="30" height="30" viewBox="0 0 30 30">
            <path d="M0 0h30v30H0z" fill="#067bdc" />
            <path d="M5 5h20v20H5z" fill="#7cc5e4" />
            <g fill="none" stroke="#fff" strokeWidth="1.300">
              <path d="M9 19.500V15a5.500 5.500 0 0 1 11 0v5H15" />
              <circle cx="14.500" cy="15" r="3" />
            </g>
          </svg>
        </TaskSlot>
        <TaskSlot $w={61} $active>
          <svg width="30" height="30" viewBox="0 0 30 30">
            <circle cx="15" cy="15" r="14.400" fill="#f5f5f5" stroke="#c6c6c8" />
            <path d="M7 7.500 15 15l8-7.500M15 15v11" fill="none" stroke="#cf1a1a" strokeWidth="3.600" />
          </svg>
        </TaskSlot>
        <TaskSlot $w={63}>
          <Yandex fill="#fc3531" stroke="#fc3531" size={30} />
        </TaskSlot>
        <TaskSlot $w={62}>
          <svg width="28" height="28" viewBox="0 0 28 28">
            <rect width="28" height="28" rx="6" fill="#4a8cf7" />
            <path d="M5.500 9.500h11a2 2 0 0 1 2 2V19h-11a2 2 0 0 1-2-2zM19.500 12.500l3.500-2.800v9l-3.500-2.700z" fill="#fff" />
          </svg>
        </TaskSlot>
        <TaskSlot $w={62}>
          <svg width="30" height="30" viewBox="0 0 30 30">
            <circle cx="15" cy="15" r="15" fill="#5865f2" />
            <FaDiscord x="5.500" y="5.500" width="19" height="19" size={19} color="#fff" />
          </svg>
        </TaskSlot>
        <TaskSlot $w={62}>
          <svg width="30" height="30" viewBox="0 0 30 30">
            <path d="M22 0v8L3.500 22.500 0 20.500v-2z" fill="#0b72b5" />
            <path d="M0 11.500v-2l3.500-2L22 22v8z" fill="#1583c9" />
            <path d="M22 0 30 3.500v23L22 30z" fill="#2aa3ea" />
          </svg>
        </TaskSlot>
        <TaskSlot $w={60}>
          <svg width="26" height="30" viewBox="0 0 26 30">
            <path d="M5 24q8 7 16 0l-1 4q-7 4-14 0z" fill="#8d9bab" />
            <path d="M13 1 24 6 23 19 13 26 3 19 2 6z" fill="#152b4c" stroke="#dfe5ec" strokeWidth="2" />
            <path d="M2 6l11 5 11-5M13 11v15" fill="none" stroke="#dfe5ec" strokeWidth="2.200" />
          </svg>
        </TaskSlot>

        <Tray>
          <svg width="28" height="20" viewBox="0 0 28 20">
            <path d="M13 3Q21-3 26 5q3 6-1 11z" fill="#4e8cc5" />
            <path d="M6 19.500a6 6 0 0 1-.5-11.500A8 8 0 0 1 20 5.500a6.500 6.500 0 0 1 1.500 14z" fill="#b4e0f8" />
          </svg>
          <TrayText $w={52} $size={18.5} $ls={-0.5}>7°C</TrayText>
          <Slot $w={34}>
            <svg width="17" height="10" viewBox="0 0 17 10" fill="none" stroke="#111" strokeWidth="1.300">
              <path d="M.500 9l8-8 8 8" />
            </svg>
          </Slot>
          <Slot $w={28}>
            <svg width="16" height="19" viewBox="0 0 16 19" fill="none" stroke="#111" strokeWidth="1.200">
              <rect x="1" y="5" width="9.500" height="9" rx="1.500" />
              <path d="M10.500 8.500 14 6v7.500l-3.500-2.500M2 2.500q4-3 8.500 0M2 16.500q4 3 8.500 0" />
            </svg>
          </Slot>
          <Slot $w={30}>
            <svg width="14" height="20" viewBox="0 0 14 20">
              <rect x="3" width="9" height="15" rx="1.500" />
              <path d="M1 11v3q0 3 3 3h6.500q3 0 3-3v-3M7.300 17v3M4 19.500h7" fill="none" stroke="#000" strokeWidth="1.200" />
            </svg>
          </Slot>
          <Slot $w={32}>
            <svg width="20" height="12" viewBox="0 0 20 12">
              <path d="M.600.600h16.500v10.500H.600z" fill="none" stroke="#000" strokeWidth="1.200" />
              <path d="M2.500 2.500h9v6.600h-9zM17.500 4h1.800v4h-1.800z" />
            </svg>
          </Slot>
          <Slot $w={30}>
            <svg width="16" height="16" viewBox="0 0 16 16" fill="none" stroke="#222" strokeWidth="1.200">
              <path d="M1 15.500A14.500 14.500 0 0 1 15.500 1" stroke="#8b828b" />
              <path d="M4.500 15.500a11 11 0 0 1 11-11M8 15.500A7.500 7.500 0 0 1 15.500 8" />
              <path d="M11.300 15.500a4.200 4.200 0 0 1 4.200-4.200" />
              <circle cx="14" cy="14.300" r="1.300" fill="#000" />
            </svg>
          </Slot>
          <Slot $w={28}>
            <svg width="21" height="18" viewBox="0 0 21 18" fill="none" stroke="#111" strokeWidth="1.200">
              <path d="M.700 6.500h3l4-4v13l-4-4h-3zM11 6.500q2 2.500 0 5M14 4q4 5 0 10M17 1.500q6 7.500 0 15" />
            </svg>
          </Slot>
          <TrayText $w={44} $size={14.5} $ls={-0.3}>РУС</TrayText>
          <Clock>
            18:41
            <br />
            15.10.2021
          </Clock>
          <Note>
            <svg width="36" height="50" viewBox="0 0 36 50">
              <path d="M2 15h20v16.500H11V35l-4-3.500H2z" />
              <path d="M5.500 19.500h13M5.500 23h13M5.500 26.500h8" stroke="#e6d3de" strokeWidth="1.300" />
              <circle cx="21.500" cy="34.500" r="10" fill="#d2ccd0" stroke="#777" strokeWidth="1.200" />
              <text x="21.500" y="39.500" textAnchor="middle" fontSize="14" fontFamily="Open Sans, sans-serif">1</text>
            </svg>
          </Note>
          <Slot $w={5} />
        </Tray>
      </TaskBar>
    </Screen>
  );
}
